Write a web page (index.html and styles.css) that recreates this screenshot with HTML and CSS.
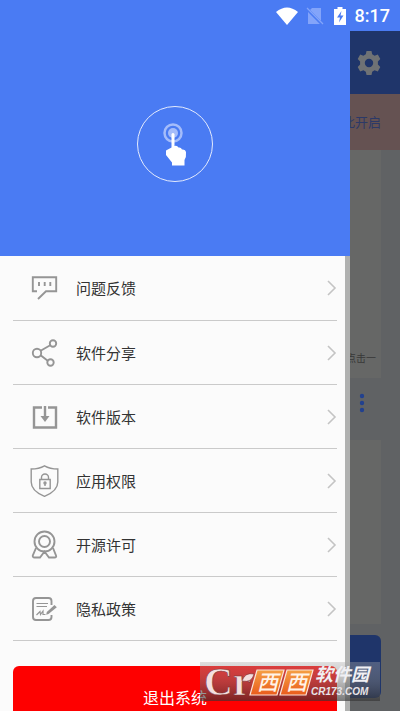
FILE: index.html
```html
<!DOCTYPE html>
<html lang="zh-CN">
<head>
<meta charset="utf-8">
<meta name="viewport" content="width=device-width, initial-scale=1">
<title>菜单</title>
<link rel="stylesheet" href="styles.css">
</head>
<body>
<div class="screen">
  <header class="status">
    <svg class="status-icon wifi" viewBox="0 0 24 18" aria-hidden="true"><path d="M1 5Q12-4 23 5L12 18Z" fill="#fff"/></svg>
    <svg class="status-icon sim" viewBox="0 0 18 18" aria-hidden="true"><path d="M6 1H15V17H2V5Z" fill="#83a4fa"/><path d="M1 2L16 17" stroke="#4a7bf3" stroke-width="3"/><path d="M1 1L17 17" stroke="#83a4fa" stroke-width="1.3"/></svg>
    <svg class="status-icon battery" viewBox="0 0 12 18" aria-hidden="true"><path d="M3.500 0H8.500V2H12V18H0V2H3.500Z" fill="#fff"/><path d="M7.500 4L3 10.500H6L5 15.500L9.500 8.500H6.500Z" fill="#4a7bf3"/></svg>
    <time class="clock">8:17</time>
  </header>

  <div class="stage">
    <main class="page">
      <div class="topbar">
        <button class="icon-button" type="button" aria-label="设置">
          <svg class="gear" viewBox="0 0 24 24" aria-hidden="true"><path fill="#6f7275" fill-rule="evenodd" d="M9.500 0H14.500L15.200 3.300L17.600 4.700L20.800 3.600L23.300 8L20.900 10.400V13.600L23.300 16L20.800 20.400L17.600 19.300L15.200 20.700L14.500 24H9.500L8.800 20.700L6.400 19.300L3.200 20.400L.7 16L3.100 13.600V10.400L.7 8L3.200 3.600L6.400 4.700L8.800 3.300ZM12 7.800A4.200 4.200 0 1 0 12 16.200A4.200 4.200 0 1 0 12 7.800Z"/></svg>
        </button>
      </div>
      <div class="banner">点击此开启</div>
      <section class="card card-tall"><p class="card-note">点击一</p></section>
      <div class="card-head">
        <button class="icon-button" type="button" aria-label="更多">
          <svg class="more" viewBox="0 0 6 20" aria-hidden="true"><g fill="#22418f"><circle cx="3" cy="3" r="2.200"/><circle cx="3" cy="10" r="2.200"/><circle cx="3" cy="17" r="2.200"/></g></svg>
        </button>
      </div>
      <section class="card card-short"></section>
      <button class="start" type="button" aria-label="开始"></button>
    </main>

    <aside class="drawer">
      <div class="hero">
        <div class="logo">
          <svg class="touch" viewBox="0 0 26 44" aria-hidden="true"><circle cx="11" cy="11" r="8.500" fill="none" stroke="#a4bcfa" stroke-width="2.500"/><circle cx="11" cy="11" r="5" fill="#a4bcfa"/><path d="M9.500 12Q11 10 12.500 12V24Q15 23 16.500 25.500Q19 25 20 27.500Q23.500 27 24 30Q24.500 35 22.500 38V43.500H10V40.500L4 33V28.500L9.500 25.500Z" fill="#fff"/></svg>
        </div>
      </div>
      <nav class="menu">
        <a class="item" href="#feedback">
          <svg class="icon" viewBox="0 0 32 32" aria-hidden="true"><path d="M9 19.300H4.800V5.300H28.200V19.300H18L10 27"/><path d="M11 10V14M16.700 10V14M22.300 10V14"/></svg>
          <span class="label">问题反馈</span>
          <svg class="chevron" viewBox="0 0 10 16" aria-hidden="true"><path d="M1 1L8 8L1 15"/></svg>
        </a>
        <a class="item" href="#share">
          <svg class="icon" viewBox="0 0 32 32" aria-hidden="true"><circle cx="9" cy="16" r="4.200"/><circle cx="25" cy="6.500" r="3.200"/><circle cx="22.500" cy="25.500" r="3.200"/><path d="M12.600 13.800L22.200 8.200M12.600 18.200L19.700 23.800"/></svg>
          <span class="label">软件分享</span>
          <svg class="chevron" viewBox="0 0 10 16" aria-hidden="true"><path d="M1 1L8 8L1 15"/></svg>
        </a>
        <a class="item" href="#version">
          <svg class="icon bold" viewBox="0 0 32 32" aria-hidden="true"><path d="M14 6.500H6V26.500H28V6.500H20"/><path d="M17 5V17"/><path class="solid" d="M12.500 15H21.500L17 21Z"/></svg>
          <span class="label">软件版本</span>
          <svg class="chevron" viewBox="0 0 10 16" aria-hidden="true"><path d="M1 1L8 8L1 15"/></svg>
        </a>
        <a class="item" href="#permission">
          <svg class="icon thin" viewBox="0 0 32 32" aria-hidden="true"><path d="M16.500 .8Q11 4 3.200 4V17Q3.200 26 16.500 31.300Q29.800 26 29.800 17V4Q22 4 16.500 .8Z"/><path d="M11.800 14.500H22.200V23.500H11.800ZM13.500 14.500V12.500A3.500 3.500 0 0 1 20.500 12.500V14.500M17 18.500V21"/><circle cx="17" cy="18" r="1"/></svg>
          <span class="label">应用权限</span>
          <svg class="chevron" viewBox="0 0 10 16" aria-hidden="true"><path d="M1 1L8 8L1 15"/></svg>
        </a>
        <a class="item" href="#license">
          <svg class="icon" viewBox="0 0 32 32" aria-hidden="true"><circle cx="16.500" cy="12.500" r="10"/><circle cx="16.500" cy="12.500" r="5.500"/><path d="M8 19L4.800 26.500Q4.500 28.500 6.500 28.500H12L16.500 22.500L21 28.500H26.500Q28.800 28.500 28 26.500L25 19"/></svg>
          <span class="label">开源许可</span>
          <svg class="chevron" viewBox="0 0 10 16" aria-hidden="true"><path d="M1 1L8 8L1 15"/></svg>
        </a>
        <a class="item" href="#privacy">
          <svg class="icon" viewBox="0 0 32 32" aria-hidden="true"><path d="M23.500 12V8Q23.500 5 20.500 5H8Q5 5 5 8V24Q5 27 8 27H20.500Q23.500 27 23.500 24V22"/><path class="fine" d="M8.500 10.500H20M8.500 13.500H19M8.500 22L12 18.500L12.500 21.500L15 18V21.500H17.500"/><path class="solid" d="M26.500 12L28.800 14.300L20.500 21L18.200 21.800L18.800 19Z"/></svg>
          <span class="label">隐私政策</span>
          <svg class="chevron" viewBox="0 0 10 16" aria-hidden="true"><path d="M1 1L8 8L1 15"/></svg>
        </a>
        <button class="exit" type="button">退出系统</button>
      </nav>
    </aside>
  </div>

  <svg class="stamp" viewBox="0 0 180 42" role="img" aria-label="Cr 西西软件园 CR173.COM">
    <defs>
      <linearGradient id="shade" x1="0" y1="0" x2="0" y2="1"><stop offset="0" stop-color="#aaa" stop-opacity=".35"/><stop offset=".5" stop-color="#777" stop-opacity=".5"/><stop offset="1" stop-color="#333" stop-opacity=".65"/></linearGradient>
      <linearGradient id="tile" x1="0" y1="0" x2="0" y2="1"><stop offset="0" stop-color="#f5a044"/><stop offset="1" stop-color="#ea5c1c"/></linearGradient>
    </defs>
    <path d="M0 3H180V42H0Z" fill="url(#shade)"/>
    <text class="stamp-initials" x="4" y="36">Cr</text>
    <path d="M42 22Q45 13 54 15Q52 24 42 22Z" fill="#f4dfdf" stroke="#7a3030" stroke-width=".6"/>
    <g fill="url(#tile)" stroke="#fbe3d8" stroke-width="1.200"><path d="M57 11H84L77 36H50Z"/><path d="M87 11H113L106 36H80Z"/></g>
    <text class="stamp-tiles" y="31"><tspan x="57">西</tspan><tspan x="86">西</tspan></text>
    <text class="stamp-name" x="115" y="22">软件园</text>
    <text class="stamp-site" x="111" y="36">CR173.COM</text>
  </svg>
</div>
</body>
</html>
```
FILE: styles.css
```css
* {
  box-sizing: border-box;
}

body {
  margin: 0;
  font-family: "Noto Sans", "Noto Sans CJK SC", sans-serif;
  background: #606264;
}

button {
  border: 0;
  padding: 0;
  font: inherit;
}

.screen {
  position: relative;
  display: flex;
  flex-direction: column;
  height: 100vh;
  overflow: hidden;
}

.status {
  flex: none;
  display: flex;
  align-items: center;
  justify-content: flex-end;
  height: 31px;
  padding: 0 10px;
  background: #4a7bf3;
}

.status-icon {
  height: 18px;
}

.wifi {
  width: 24px;
  margin-right: 7px;
}

.sim {
  width: 18px;
  margin-right: 10px;
}

.battery {
  width: 12px;
  margin-right: 9px;
}

.clock {
  color: #fff;
  font: 500 18px/31px Roboto, sans-serif;
}

.stage {
  flex: 1;
  min-height: 0;
  display: grid;
  grid-template-columns: minmax(0, 1fr) 50px;
}

.page,
.drawer {
  grid-row: 1;
}

.page {
  grid-column: 1 / 3;
  padding-bottom: 13px;
  background: #606264;
}

.icon-button {
  display: flex;
  background: none;
}

.topbar {
  display: flex;
  align-items: center;
  justify-content: flex-end;
  height: 63px;
  padding: 0 19px;
  background: #1f356a;
}

.gear {
  width: 24px;
  height: 24px;
}

.banner {
  height: 56px;
  padding: 0 19px;
  background: #655252;
  color: #2c3967;
  font-size: 13px;
  line-height: 56px;
  text-align: right;
}

.card {
  margin: 0 19px;
  background: #666766;
}

.card-tall {
  display: flex;
  align-items: flex-end;
  justify-content: flex-end;
  height: 228px;
  padding: 12px 5px;
}

.card-note {
  margin: 0;
  color: #383838;
  font-size: 10px;
  line-height: 16px;
}

.card-head {
  display: flex;
  align-items: center;
  justify-content: flex-end;
  height: 62px;
  padding: 0 35px 12px;
}

.more {
  width: 6px;
  height: 20px;
}

.card-short {
  height: 184px;
}

.start {
  display: block;
  width: calc(100% - 38px);
  height: 63px;
  margin: 11px 19px 0;
  border-radius: 6px;
  background: #1f356a;
}

.drawer {
  grid-column: 1;
  z-index: 1;
  min-height: 0;
  overflow: hidden;
}

.hero {
  display: flex;
  align-items: center;
  justify-content: center;
  height: 225px;
  background: #4a7bf3;
}

.logo {
  display: flex;
  align-items: center;
  justify-content: center;
  width: 76px;
  height: 76px;
  border: 1px solid #e4ebfd;
  border-radius: 50%;
}

.touch {
  width: 26px;
  height: 44px;
}

.menu {
  padding: 0 8px 20px 13px;
  border-right: 5px solid #b0b1b0;
  background: #fbfbfb;
}

.item {
  display: flex;
  align-items: center;
  height: 64px;
  padding-left: 15px;
  border-bottom: 1px solid #cacaca;
  color: #333;
  text-decoration: none;
}

.item:first-child {
  height: 65px;
}

.icon {
  width: 32px;
  height: 32px;
  margin-right: 16px;
  fill: none;
  stroke: #959595;
  stroke-width: 1.9;
}

.bold {
  stroke-width: 2.4;
}

.thin {
  stroke-width: 1.4;
}

.fine {
  stroke-width: 1.2;
}

.solid {
  fill: #959595;
  stroke: none;
}

.label {
  flex: 1;
  font-size: 15px;
  line-height: 24px;
}

.chevron {
  width: 10px;
  height: 16px;
  fill: none;
  stroke: #c4c4c4;
  stroke-width: 1.6;
}

.exit {
  display: block;
  width: 100%;
  height: 62px;
  margin-top: 25px;
  border-radius: 6px;
  background: #fe0000;
  color: #fff;
  font-size: 16px;
}

.stamp {
  position: absolute;
  z-index: 2;
  right: 20px;
  bottom: 10px;
  width: 180px;
  height: 42px;
  overflow: visible;
}

.stamp-initials {
  fill: #f4dfdf;
  stroke: #7a3030;
  stroke-width: 0.6;
  font: 700 40px "Liberation Serif", serif;
}

.stamp-tiles {
  fill: #fff3e8;
  font: italic 500 21px "Noto Sans CJK SC", sans-serif;
}

.stamp-name {
  fill: #f0f0f4;
  font: italic 700 18px "Noto Sans CJK SC", sans-serif;
}

.stamp-site {
  fill: #e8e4e8;
  font: italic 700 10px "Liberation Sans", sans-serif;
}
```
